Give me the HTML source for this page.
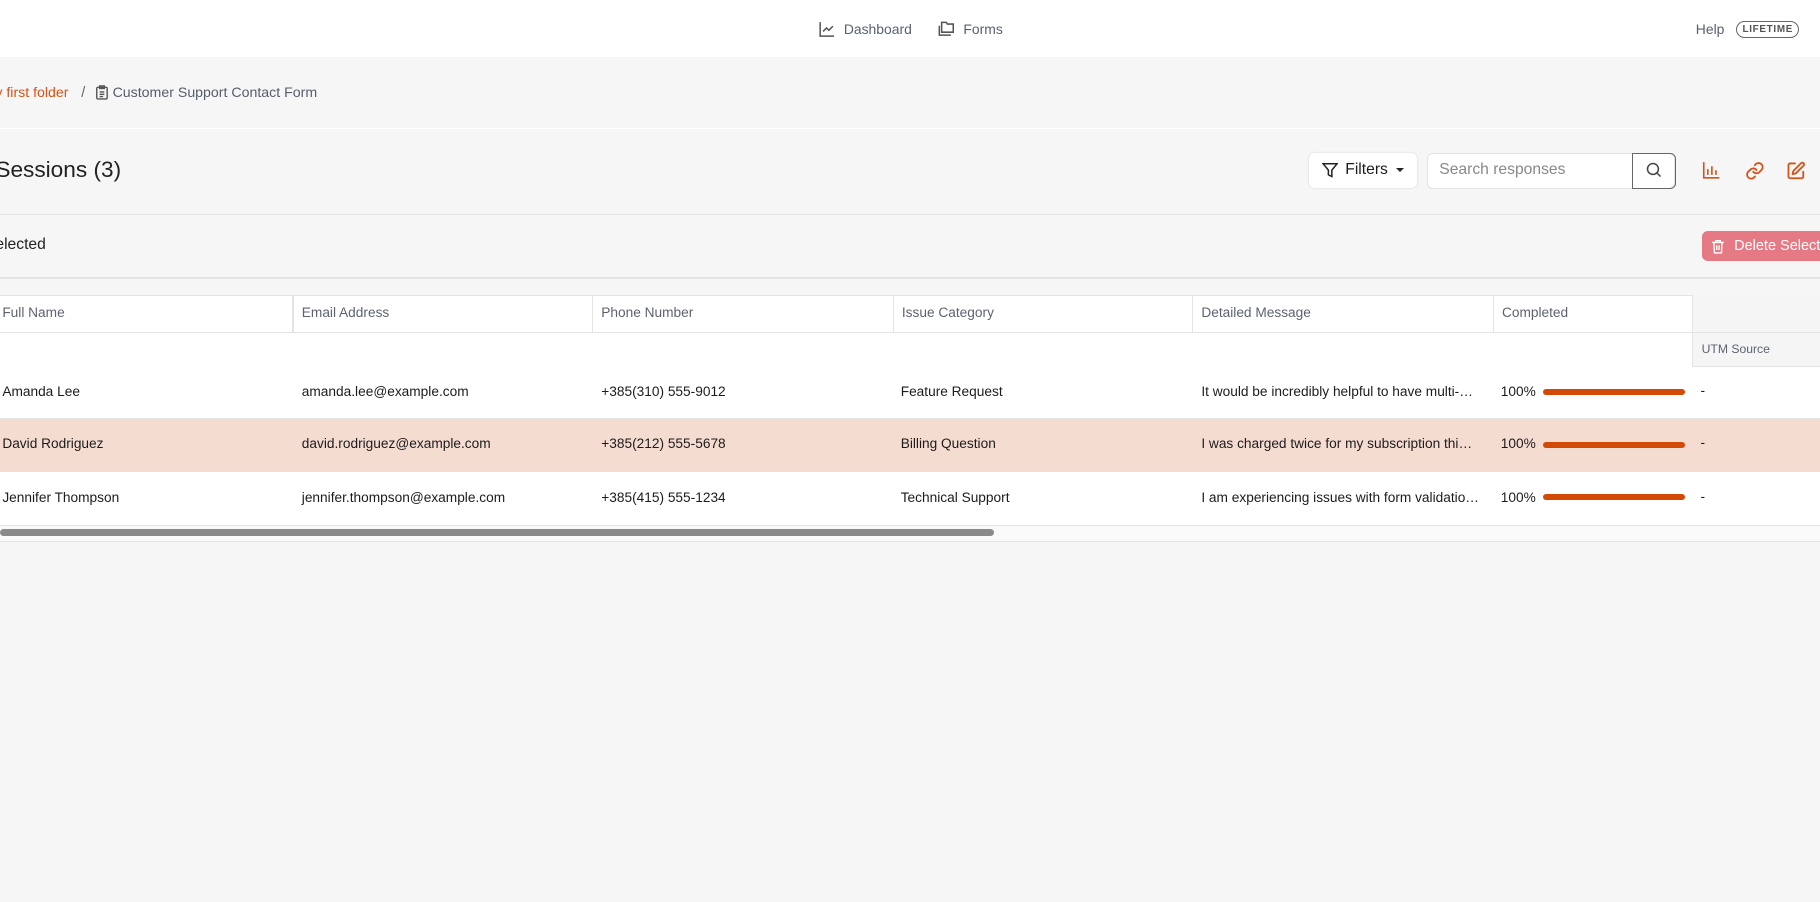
<!DOCTYPE html>
<html><head><meta charset="utf-8"><style>
*{box-sizing:border-box;margin:0;padding:0}
html,body{width:1820px;height:902px;overflow:hidden;background:#f6f6f6}
#w{zoom:1.16071;width:1568px;height:777px;position:relative;font-family:"Liberation Sans",sans-serif;color:#222}
.a{position:absolute;white-space:nowrap}
.hdr{left:0;top:0;width:1568px;height:49px;background:#fff}
.nav{font-size:12px;color:#5a6070}
.line{position:absolute;left:0;width:1568px;height:1px;background:#e4e4e4}
.th{font-size:11.8px;color:#5c6370}
.td{font-size:11.8px;color:#1c1c1c}
.bar{position:absolute;height:5px;border-radius:3px;background:#d24a05;width:123px}
</style></head><body><div id="w">
<div class="a hdr"></div>
<svg class="a" style="left:706px;top:18px" width="14" height="14" viewBox="0 0 14 14" fill="none" stroke="#555" stroke-width="1.3"><path d="M1 1v12h12"/><path d="M3.5 9l3-3 2 2 3.5-3.5"/></svg>
<div class="a nav" style="left:727px;top:18px">Dashboard</div>
<svg class="a" style="left:807px;top:17px" width="16" height="15" viewBox="0 0 16 15" fill="none" stroke="#555" stroke-width="1.3"><path d="M4 3V2h4l1 1.5h5v7H4z"/><path d="M2 5v8h10"/></svg>
<div class="a nav" style="left:830px;top:18px">Forms</div>
<div class="a nav" style="left:1461px;top:18px">Help</div>
<div class="a" style="left:1496px;top:18px;width:54px;height:15px;border:1px solid #666;border-radius:8px;font-size:8.5px;font-weight:bold;letter-spacing:.6px;color:#555;text-align:center;line-height:13px">LIFETIME</div>

<div class="a" style="left:-4px;top:73px;font-size:12.2px;color:#d2541a">y first folder</div>
<div class="a" style="left:70px;top:73px;font-size:12.5px;color:#666">/</div>
<svg class="a" style="left:82px;top:73px" width="12" height="13" viewBox="0 0 12 13" fill="none" stroke="#555" stroke-width="1.2"><rect x="1.5" y="2" width="9" height="10" rx="1"/><rect x="4" y=".8" width="4" height="2.2"/><path d="M4 6h4M4 8h4M4 10h3"/></svg>
<div class="a" style="left:97px;top:73px;font-size:12.2px;color:#555d6b">Customer Support Contact Form</div>
<div class="line" style="top:110px;background:#fff"></div>

<div class="a" style="left:-4px;top:135px;font-size:19.5px;color:#222">Sessions (3)</div>
<div class="a" style="left:1128px;top:132px;width:93px;height:30px;background:#fff;border-radius:5px;box-shadow:0 0 2px rgba(0,0,0,.15)"></div>
<svg class="a" style="left:1139px;top:140px" width="14" height="14" viewBox="0 0 14 14" fill="none" stroke="#222" stroke-width="1.3"><path d="M1 1.5h12L8.5 7v5.5l-3-1.5V7z"/></svg>
<div class="a" style="left:1159px;top:139px;font-size:13.5px;color:#1c1c1c">Filters</div>
<div class="a" style="left:1203px;top:145px;border:3.5px solid transparent;border-top:4px solid #222"></div>
<div class="a" style="left:1229px;top:132px;width:214px;height:31px;background:#fff;border:1px solid #e2e2e2;border-radius:5px"></div>
<div class="a" style="left:1406px;top:132px;width:38px;height:31px;border:1px solid #666;border-radius:0 5px 5px 0"></div>
<svg class="a" style="left:1418px;top:140px" width="14" height="14" viewBox="0 0 14 14" fill="none" stroke="#444" stroke-width="1.3"><circle cx="6" cy="6" r="4.7"/><path d="M9.5 9.5l3 3"/></svg>
<div class="a" style="left:1240px;top:139px;font-size:13.5px;color:#888">Search responses</div>
<svg class="a" style="left:1466px;top:139px" width="16" height="16" viewBox="0 0 16 16" fill="none" stroke="#d2541a" stroke-width="1.4"><path d="M1.5 1v13.5H15M5 12V7M8.5 12V4.5M12 12V8"/></svg>
<svg class="a" style="left:1503px;top:139px" width="17" height="17" viewBox="0 0 24 24" fill="none" stroke="#d2541a" stroke-width="2.2" stroke-linecap="round"><path d="M10 13a5 5 0 0 0 7.5.5l3-3a5 5 0 0 0-7-7l-1.7 1.7"/><path d="M14 11a5 5 0 0 0-7.5-.5l-3 3a5 5 0 0 0 7 7l1.7-1.7"/></svg>
<svg class="a" style="left:1539px;top:139px" width="17" height="17" viewBox="0 0 24 24" fill="none" stroke="#d2541a" stroke-width="2.2" stroke-linecap="round" stroke-linejoin="round"><path d="M11 3H5a2 2 0 0 0-2 2v14a2 2 0 0 0 2 2h14a2 2 0 0 0 2-2v-6"/><path d="M18.4 2.6a2 2 0 0 1 3 3L12 15l-4 1 1-4z"/></svg>
<div class="line" style="top:184px"></div>

<div class="a" style="left:-4px;top:203px;font-size:13.5px;color:#222">elected</div>
<div class="a" style="left:1466px;top:199px;width:110px;height:26px;background:#e57a85;border-radius:5px"></div>
<svg class="a" style="left:1474px;top:206px" width="12" height="13" viewBox="0 0 12 13" fill="none" stroke="#fff" stroke-width="1.2"><path d="M1 3h10M4 3V1.5h4V3M2.5 3l.5 9h6l.5-9M5 5.5v4M7 5.5v4"/></svg>
<div class="a" style="left:1494px;top:205px;font-size:12.5px;color:#fff">Delete Selected</div>
<div class="line" style="top:239px"></div>

<div class="a" style="left:0;top:254px;width:1568px;height:198px;background:#fff;border-top:1px solid #e4e4e4"></div>
<div class="a" style="left:1458px;top:254px;width:110px;height:62px;background:#f5f5f5;border-left:1px solid #e4e4e4"></div>
<div class="line" style="top:286px;width:1568px"></div>
<div class="line" style="top:315px;left:1458px;width:110px"></div>
<div class="a" style="left:252px;top:254px;width:1px;height:32px;background:#e4e4e4"></div>
<div class="a" style="left:510px;top:254px;width:1px;height:32px;background:#e4e4e4"></div>
<div class="a" style="left:769px;top:254px;width:1px;height:32px;background:#e4e4e4"></div>
<div class="a" style="left:1027px;top:254px;width:1px;height:32px;background:#e4e4e4"></div>
<div class="a" style="left:1286px;top:254px;width:1px;height:32px;background:#e4e4e4"></div>
<div class="a th" style="left:2px;top:263px">Full Name</div>
<div class="a th" style="left:260px;top:263px">Email Address</div>
<div class="a th" style="left:518px;top:263px">Phone Number</div>
<div class="a th" style="left:777px;top:263px">Issue Category</div>
<div class="a th" style="left:1035px;top:263px">Detailed Message</div>
<div class="a th" style="left:1294px;top:263px">Completed</div>
<div class="a th" style="left:1466px;top:295px;font-size:10.5px">UTM Source</div>

<div class="a" style="left:0;top:361px;width:1568px;height:45px;background:#f5dcd1"></div>
<div class="line" style="top:360px"></div><div class="line" style="top:406px"></div><div class="line" style="top:452px"></div>

<div class="a td" style="left:2px;top:331px">Amanda Lee</div>
<div class="a td" style="left:260px;top:331px">amanda.lee@example.com</div>
<div class="a td" style="left:518px;top:331px">+385(310) 555-9012</div>
<div class="a td" style="left:776px;top:331px">Feature Request</div>
<div class="a td" style="left:1035px;top:331px">It would be incredibly helpful to have multi-…</div>
<div class="a td" style="left:1293px;top:331px">100%</div><div class="bar" style="left:1329px;top:335px"></div>
<div class="a td" style="left:1465px;top:330px">-</div>

<div class="a td" style="left:2px;top:376px">David Rodriguez</div>
<div class="a td" style="left:260px;top:376px">david.rodriguez@example.com</div>
<div class="a td" style="left:518px;top:376px">+385(212) 555-5678</div>
<div class="a td" style="left:776px;top:376px">Billing Question</div>
<div class="a td" style="left:1035px;top:376px">I was charged twice for my subscription thi…</div>
<div class="a td" style="left:1293px;top:376px">100%</div><div class="bar" style="left:1329px;top:381px"></div>
<div class="a td" style="left:1465px;top:375px">-</div>

<div class="a td" style="left:2px;top:422px">Jennifer Thompson</div>
<div class="a td" style="left:260px;top:422px">jennifer.thompson@example.com</div>
<div class="a td" style="left:518px;top:422px">+385(415) 555-1234</div>
<div class="a td" style="left:776px;top:422px">Technical Support</div>
<div class="a td" style="left:1035px;top:422px">I am experiencing issues with form validatio…</div>
<div class="a td" style="left:1293px;top:422px">100%</div><div class="bar" style="left:1329px;top:426px"></div>
<div class="a td" style="left:1465px;top:421px">-</div>

<div class="a" style="left:0;top:453px;width:1568px;height:13px;background:#f9f9f9"></div>
<div class="a" style="left:0;top:456px;width:856px;height:6px;border-radius:3px;background:#8a8a8a"></div>
<div class="line" style="top:466px"></div>
</div></body></html>
